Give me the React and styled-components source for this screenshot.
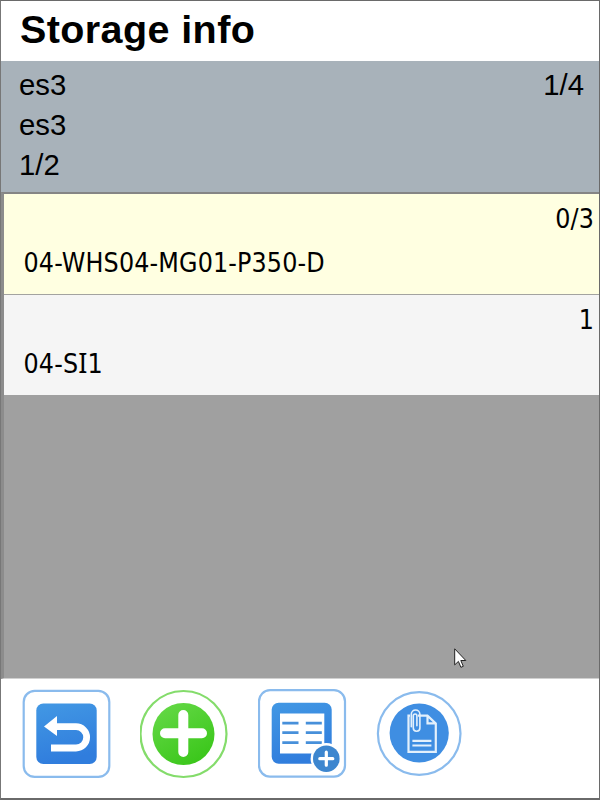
import React from "react";
import styled, { createGlobalStyle } from "styled-components";

const GlobalStyle = createGlobalStyle`
  * { box-sizing: border-box; }
  html, body { margin: 0; padding: 0; }
`;

const Window = styled.main`
  position: relative;
  display: flex;
  flex-direction: column;
  width: 600px;
  height: 800px;
  overflow: hidden;
  background: #fff;
  border: 1px solid #6a6a6a;
  border-left-color: #777;
  border-bottom-width: 2px;
  color: #000;
  font-family: "Liberation Sans", Arial, sans-serif;
`;

const Title = styled.h1`
  flex: none;
  height: 60px;
  margin: 0;
  padding-left: 19px;
  font-size: 39.5px;
  letter-spacing: 0.4px;
  line-height: 57px;
  font-weight: 700;
`;

const Summary = styled.section`
  flex: none;
  display: flex;
  justify-content: space-between;
  height: 131px;
  padding: 4px 15px 0 18px;
  background: #a8b2ba;
  font-size: 29.3px;
  line-height: 40px;
`;

const List = styled.section`
  flex: none;
  height: 487px;
  background: #a0a0a0;
  border-top: 2px solid #858585;
  border-left: 3px solid #8c8c8c;
  border-bottom: 1px solid #d0d0d0;
`;

const Row = styled.article`
  display: flex;
  flex-direction: column;
  height: ${(p) => (p.$selected ? 101 : 100)}px;
  padding: 3px 5px 0 19.5px;
  background: ${(p) => (p.$selected ? "#ffffe1" : "#f5f5f5")};
  border-bottom: ${(p) => (p.$selected ? "1px solid #a3a3a0" : "none")};
  font-family: "DejaVu Sans Condensed", "DejaVu Sans", sans-serif;
  font-stretch: condensed;
  font-size: 26.5px;
  letter-spacing: 0.15px;
  line-height: 44px;
`;

const Count = styled.span`
  align-self: flex-end;
`;

const SerifCap = styled.span`
  font-family: "Noto Sans", sans-serif;
  font-size: 27px;
  line-height: 1;
`;

const Toolbar = styled.nav`
  flex: 1;
  display: flex;
  align-items: flex-start;
  gap: 28px;
  padding: 10px 0 0 21px;
`;

const ToolButton = styled.button`
  width: 90px;
  height: 92px;
  padding: 0;
  border: 0;
  background: transparent;

  svg { display: block; }
`;

const Cursor = styled.svg`
  position: absolute;
  left: 453px;
  top: 647px;
`;

function Icon({ children }) {
  return (
    <svg width="90" height="92" viewBox="0 0 90 92" fill="none">
      <defs>
        <linearGradient id="blue" x1="0" y1="0" x2="0.25" y2="1">
          <stop offset="0" stopColor="#4298e4" />
          <stop offset="1" stopColor="#307ddd" />
        </linearGradient>
        <linearGradient id="green" x1="0" y1="0" x2="0.6" y2="1">
          <stop offset="0" stopColor="#68da4a" />
          <stop offset="1" stopColor="#3cc71c" />
        </linearGradient>
      </defs>
      {children}
    </svg>
  );
}

function BackIcon() {
  return (
    <Icon>
      <rect x="1.7" y="1.9" width="85.6" height="86" rx="11" stroke="#8abbed" strokeWidth="2.2" />
      <rect x="14.3" y="14.5" width="60.4" height="60.5" rx="7" fill="url(#blue)" />
      <path d="M22 37.5 35 27v20z" fill="#fff" />
      <path d="M34 37.7h20a10.6 10.6 0 0 1 0 21.3H29" stroke="#fff" strokeWidth="6.8" />
    </Icon>
  );
}

function AddIcon() {
  return (
    <Icon>
      <circle cx="43.5" cy="45" r="43" stroke="#84dc6b" strokeWidth="2.2" />
      <circle cx="43.5" cy="45" r="31" fill="url(#green)" />
      <path d="M25 44.3h37M43.3 26v37" stroke="#fff" strokeWidth="10" strokeLinecap="round" />
    </Icon>
  );
}

function TableAddIcon() {
  return (
    <Icon>
      <rect x="1" y="1.2" width="86" height="86.4" rx="11" stroke="#8abbed" strokeWidth="2.2" />
      <rect x="13.7" y="13.8" width="60" height="61" rx="7" fill="url(#blue)" />
      <path d="M22 24.5h44.3v40H22z" fill="#fff" />
      <path
        d="M24.3 34.1h16.2M47.8 34.1h16M24.3 43.7h16.2M47.8 43.7h16M24.3 53.7h16.2M47.8 53.7h16"
        stroke="#4790da"
        strokeWidth="2.8"
      />
      <circle cx="68.3" cy="69.7" r="15.7" fill="#fff" />
      <circle cx="68.3" cy="69.7" r="13.3" fill="#3d86cf" />
      <path d="M61.8 69.7h13M68.3 63.2v13" stroke="#fff" strokeWidth="3.2" strokeLinecap="round" />
    </Icon>
  );
}

function AttachmentIcon() {
  return (
    <Icon>
      <circle cx="43.2" cy="44.5" r="41.3" stroke="#8abbed" strokeWidth="2.2" />
      <circle cx="43.2" cy="44" r="29.6" fill="#3f8ee2" />
      <path
        d="M34 26.6h-1.5v36.2h27.3V34.4L51.5 26.6H42M51.5 26.6v7.8h8.3"
        stroke="#e3f0fc"
        strokeWidth="2.2"
      />
      <path d="M36.4 51.9h19M36.4 56.5h19" stroke="#e3f0fc" strokeWidth="2.1" />
      <path
        d="M35.3 37.8V25.3a4.3 4.3 0 0 1 8.6 0v13.6a3.3 3.3 0 0 1-6.6 0V26.8a1.8 1.8 0 0 1 3.6 0v10"
        stroke="#e3f0fc"
        strokeWidth="1.6"
        strokeLinecap="round"
      />
    </Icon>
  );
}

export default function App() {
  return (
    <>
      <GlobalStyle />
      <Window>
        <Title>Storage info</Title>
        <Summary>
          <div>
            <div>es3</div>
            <div>es3</div>
            <div>1/2</div>
          </div>
          <div>1/4</div>
        </Summary>
        <List>
          <Row $selected>
            <Count>0/3</Count>
            <span>04-WHS04-MG01-P350-D</span>
          </Row>
          <Row>
            <Count>1</Count>
            <span>
              04-S<SerifCap>I</SerifCap>1
            </span>
          </Row>
        </List>
        <Toolbar>
          <ToolButton aria-label="Back"><BackIcon /></ToolButton>
          <ToolButton aria-label="Add"><AddIcon /></ToolButton>
          <ToolButton aria-label="Add table"><TableAddIcon /></ToolButton>
          <ToolButton aria-label="Attachments"><AttachmentIcon /></ToolButton>
        </Toolbar>
        <Cursor width="13" height="21" viewBox="0 0 13 21">
          <path
            d="M.7.8v16.1l3.7-3.5 2.5 5.9 2.4-1-2.5-5.8h5z"
            fill="#fff"
            stroke="#222"
            strokeWidth="1"
          />
        </Cursor>
      </Window>
    </>
  );
}
